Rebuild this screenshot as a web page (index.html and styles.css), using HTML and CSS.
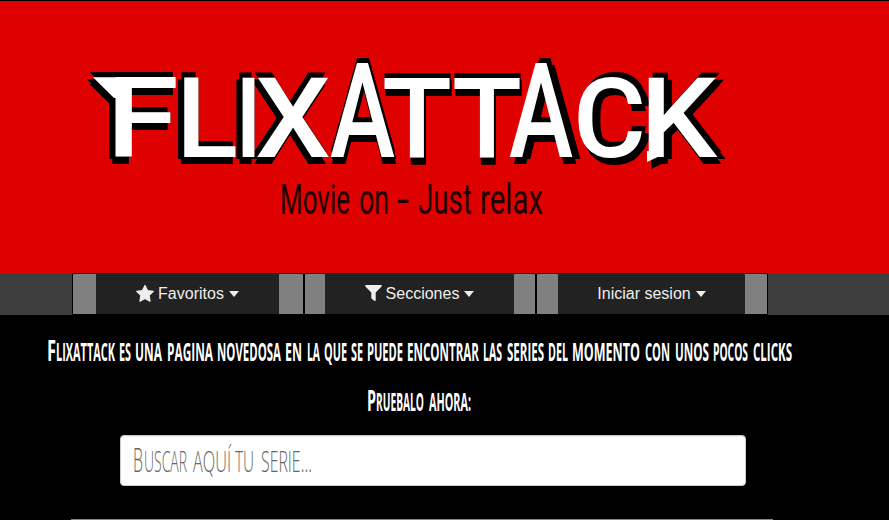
FILE: index.html
```html
<!DOCTYPE html>
<html lang="es">
<head>
<meta charset="utf-8">
<title>Flixattack</title>
<link rel="stylesheet" href="styles.css">
</head>
<body>
<header class="banner">
  <svg class="logo" viewBox="0 0 889 272" aria-label="Flixattack">
    <g class="wordmark left">
      <path d="M93 76.3H118V97H114Z"/>
      <text y="156"><tspan x="106" textLength="73" lengthAdjust="spacingAndGlyphs">F</tspan><tspan x="176" textLength="62" lengthAdjust="spacingAndGlyphs">L</tspan><tspan x="235" textLength="27" lengthAdjust="spacingAndGlyphs">I</tspan><tspan x="255" textLength="76" lengthAdjust="spacingAndGlyphs">X</tspan></text>
    </g>
    <g class="wordmark mid">
      <text y="156"><tspan class="tall" x="330" textLength="65" lengthAdjust="spacingAndGlyphs">A</tspan><tspan x="382" textLength="70" lengthAdjust="spacingAndGlyphs">T</tspan><tspan x="452" textLength="70" lengthAdjust="spacingAndGlyphs">T</tspan></text>
    </g>
    <g class="wordmark right">
      <path d="M647 150H660V155L647 161Z"/>
      <text y="156"><tspan class="tall" x="509" textLength="64" lengthAdjust="spacingAndGlyphs">A</tspan><tspan x="573" textLength="73" lengthAdjust="spacingAndGlyphs">C</tspan><tspan x="640" textLength="77" lengthAdjust="spacingAndGlyphs">K</tspan></text>
    </g>
    <text class="tagline" y="213"><tspan x="280" textLength="70" lengthAdjust="spacingAndGlyphs">Movie</tspan> <tspan x="359" textLength="30" lengthAdjust="spacingAndGlyphs">on</tspan> <tspan x="397" textLength="12" lengthAdjust="spacingAndGlyphs">-</tspan> <tspan x="418" textLength="54" lengthAdjust="spacingAndGlyphs">Just</tspan> <tspan x="480" textLength="63" lengthAdjust="spacingAndGlyphs">relax</tspan></text>
  </svg>
</header>
<nav class="nav">
  <ul class="menu">
    <li class="item first"><a class="link">
      <svg class="star" viewBox="0 0 18 17"><path d="M9 .5 11.5 5.6 17.3 6.4 13.1 10.4 14.1 16.2 9 13.5 3.9 16.2 4.9 10.4 .7 6.4 6.5 5.6Z"/></svg><span>Favoritos</span><i class="caret"></i></a></li>
    <li class="item second"><a class="link">
      <svg class="filter" viewBox="0 0 17 17"><path d="M.8 0H16.2Q17.3.6 16.6 1.5L10.7 7.5V15.3Q10.5 16.5 9.5 15.9L6.7 13.7 6.3 13V7.5L.4 1.5Q-.3.6.8 0Z"/></svg><span>Secciones</span><i class="caret"></i></a></li>
    <li class="item third"><a class="link"><span>Iniciar sesion</span><i class="caret"></i></a></li>
  </ul>
</nav>
<main class="main">
  <svg class="intro" viewBox="0 0 889 120">
    <text class="hand" y="45.5"><tspan x="47" textLength="9" lengthAdjust="spacingAndGlyphs" class="initial">F</tspan><tspan x="56" textLength="59" lengthAdjust="spacingAndGlyphs">lixattack</tspan> <tspan x="119" textLength="12" lengthAdjust="spacingAndGlyphs">es</tspan> <tspan x="135" textLength="27" lengthAdjust="spacingAndGlyphs">una</tspan> <tspan x="167" textLength="46" lengthAdjust="spacingAndGlyphs">pagina</tspan> <tspan x="217" textLength="64" lengthAdjust="spacingAndGlyphs">novedosa</tspan> <tspan x="285" textLength="17" lengthAdjust="spacingAndGlyphs">en</tspan> <tspan x="307" textLength="13" lengthAdjust="spacingAndGlyphs">la</tspan> <tspan x="324" textLength="23" lengthAdjust="spacingAndGlyphs">que</tspan> <tspan x="351" textLength="12" lengthAdjust="spacingAndGlyphs">se</tspan> <tspan x="367" textLength="36" lengthAdjust="spacingAndGlyphs">puede</tspan> <tspan x="407" textLength="72" lengthAdjust="spacingAndGlyphs">encontrar</tspan> <tspan x="483" textLength="19" lengthAdjust="spacingAndGlyphs">las</tspan> <tspan x="507" textLength="37" lengthAdjust="spacingAndGlyphs">series</tspan> <tspan x="548" textLength="20" lengthAdjust="spacingAndGlyphs">del</tspan> <tspan x="572" textLength="68" lengthAdjust="spacingAndGlyphs">momento</tspan> <tspan x="645" textLength="25" lengthAdjust="spacingAndGlyphs">con</tspan> <tspan x="675" textLength="34" lengthAdjust="spacingAndGlyphs">unos</tspan> <tspan x="713" textLength="35" lengthAdjust="spacingAndGlyphs">pocos</tspan> <tspan x="753" textLength="39" lengthAdjust="spacingAndGlyphs">clicks</tspan></text>
    <text class="hand" y="95.5"><tspan x="367" textLength="9" lengthAdjust="spacingAndGlyphs" class="initial">P</tspan><tspan x="376" textLength="48" lengthAdjust="spacingAndGlyphs">ruebalo</tspan> <tspan x="429" textLength="42" lengthAdjust="spacingAndGlyphs">ahora:</tspan></text>
  </svg>
  <div class="search">
    <svg class="placeholder" viewBox="0 0 624 49">
      <text class="thin" y="35.5"><tspan class="initial" x="12" textLength="10" lengthAdjust="spacingAndGlyphs">B</tspan><tspan x="23" textLength="43" lengthAdjust="spacingAndGlyphs">uscar</tspan> <tspan x="72" textLength="38" lengthAdjust="spacingAndGlyphs">aquí</tspan> <tspan x="114" textLength="19" lengthAdjust="spacingAndGlyphs">tu</tspan> <tspan x="140" textLength="51" lengthAdjust="spacingAndGlyphs">serie...</tspan></text>
    </svg>
  </div>
  <hr class="rule">
</main>
</body>
</html>
```
FILE: styles.css
```css
* { box-sizing: border-box; }
body {
  margin: 0;
  height: 520px;
  overflow: hidden;
  background: #000;
  font-family: "Liberation Sans", Arial, sans-serif;
}
svg { display: block; }
.banner {
  height: 273px;
  border-top: 1px solid #000;
  background: #df0000;
}
.logo { width: 889px; height: 272px; }
.wordmark {
  font: 500 112px Roboto, sans-serif;
  fill: #fff;
}
.wordmark .tall { font-size: 132px; }
.left { filter: drop-shadow(0 0 .5px #000) drop-shadow(-3px -5px 0 #000) drop-shadow(-3px 7px 0 #000); }
.mid { filter: drop-shadow(1px 0 .5px #000) drop-shadow(0 -5px 0 #000) drop-shadow(1px 7px 0 #000); }
.right { filter: drop-shadow(4px -5px 0 #000) drop-shadow(4px 7px 0 #000); }
.tagline { font: 400 16px Roboto, sans-serif; fill: #210000; }
.tagline tspan { font-size: 42px; }

.nav {
  height: 42px;
  padding-left: 72px;
  background: #3e3e3e;
}
.menu {
  display: flex;
  width: 696px;
  height: 42px;
  margin: 0;
  padding: 1px 1px 1px;
  gap: 2px;
  list-style: none;
  background: #000;
}
.item { height: 40px; background: #808080; }
.first { width: 230px; padding: 0 24px 0 23px; }
.second { width: 230px; padding: 0 21px 0 20px; }
.third { width: 230px; padding: 0 22px 0 21px; }
.link {
  display: flex;
  align-items: center;
  justify-content: center;
  height: 40px;
  background: #222;
  color: #eee;
  font-size: 16px;
}
.star, .filter { fill: #eee; }
.star {
  width: 18px;
  height: 17px;
  margin: 0 4px 2px 0;
  stroke: #eee;
  stroke-width: 1.2;
  stroke-linejoin: round;
  overflow: visible;
}
.filter { width: 17px; height: 17px; margin: 0 4px 2px 0; }
.caret {
  margin-left: 5px;
  border: 5px solid transparent;
  border-top: 6px solid #eee;
  border-bottom: 0;
}
.intro { width: 889px; height: 120px; }
.hand {
  font: 700 8px "Open Sans", sans-serif;
  fill: #fff;
  text-transform: uppercase;
}
.hand tspan { font-size: 25px; }
.hand .initial { font-size: 28px; }
.search {
  width: 626px;
  height: 51px;
  margin-left: 120px;
  border: 1px solid #ccc;
  border-radius: 4px;
  background: #fff;
  box-shadow: inset 0 1px 1px rgba(0, 0, 0, .075);
}
.placeholder { width: 624px; height: 49px; }
.thin {
  font: 300 8px "Open Sans", sans-serif;
  fill: #666;
  text-transform: uppercase;
}
.thin tspan { font-size: 30px; }
.thin .initial { font-size: 33px; }
.rule {
  width: 702px;
  height: 1px;
  margin: 33px 0 0 71px;
  border: 0;
  background: #888;
}
```
